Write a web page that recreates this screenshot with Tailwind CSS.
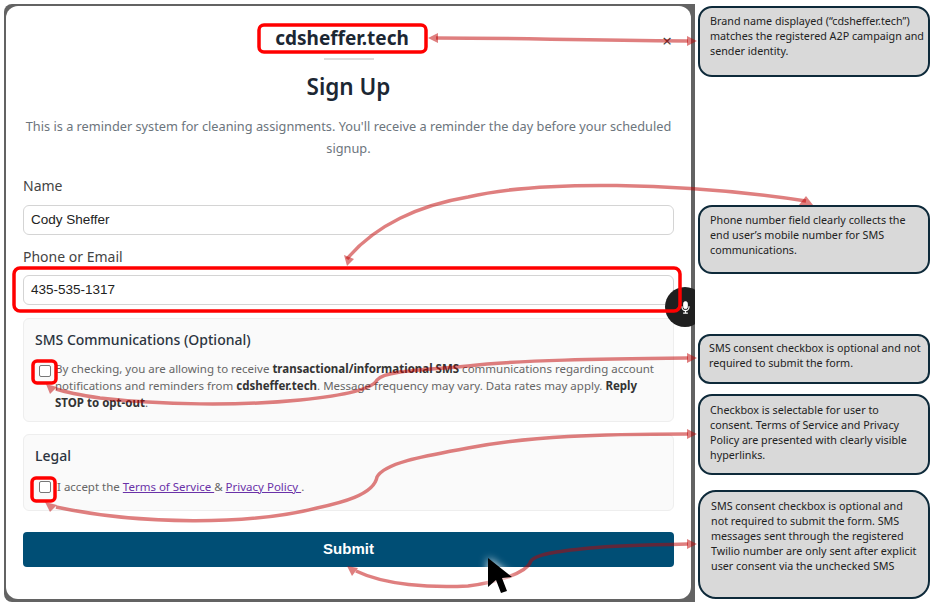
<!DOCTYPE html>
<html lang="en">
<head>
<meta charset="UTF-8" />
<title>Sign Up annotated</title>
<script src="https://cdn.jsdelivr.net/npm/@tailwindcss/browser@4"></script>
</head>
<body class="relative w-[936px] h-[603px] overflow-hidden bg-white font-['Noto_Sans',sans-serif]">
  <div class="flex items-start">
    <!-- modal screenshot -->
    <div class="relative ml-1 mt-1 w-[691px] h-[598px] overflow-hidden rounded-tl-lg rounded-bl-lg bg-[#636363] pl-[2px] pt-[2px]">
      <div class="flex flex-col w-[685px] h-[593px] rounded-xl bg-white px-[17px] pt-[20px]">
        <div class="relative text-center">
          <p class="pr-[13px] text-[19px] leading-6 font-bold text-[#1c2733]">cdsheffer.tech</p>
          <span class="absolute right-[2px] top-[5px] text-[17px] leading-5 text-[#444]">×</span>
        </div>
        <div class="mx-auto mt-[8px] h-[2px] w-[50px] bg-[#ddd]"></div>
        <h1 class="mt-[11px] text-center text-[22.5px] leading-8 font-semibold text-[#1c2733]">Sign Up</h1>
        <p class="mt-[13px] text-center text-[12.75px] leading-[21.5px] text-[#6c757d]">This is a reminder system for cleaning assignments. You'll receive a reminder the day before your scheduled signup.</p>

        <label class="mt-[17px] text-[14px] leading-5 text-[#444]">Name</label>
        <div class="mt-[9px] flex h-[30px] items-center rounded-md border border-[#d4d4d4] px-[7px] font-['Liberation_Sans',sans-serif] text-[13.5px] text-[#222]">Cody Sheffer</div>
        <label class="mt-[12px] text-[14px] leading-5 text-[#444]">Phone or Email</label>
        <div class="mt-[8px] flex h-[30px] items-center rounded-md border border-[#d4d4d4] px-[7px] font-['Liberation_Sans',sans-serif] text-[13.5px] text-[#222]">435-535-1317</div>

        <div class="mt-[13px] h-[104px] rounded-md border border-[#eee] bg-[#fafafa] pl-[11px] pr-[16px] pt-[11px]">
          <h2 class="text-[14px] leading-5 font-medium text-[#2b3440]">SMS Communications (Optional)</h2>
          <div class="mt-[10px] ml-[4px] flex items-start gap-[4px]">
            <span class="mt-[5px] h-[12px] w-[12px] shrink-0 rounded-[2px] border border-[#777] bg-white"></span>
            <p class="text-[11.5px] leading-[17px] text-[#666]">By checking, you are allowing to receive <b class="text-[#333]">transactional/informational SMS</b> communications regarding account notifications and reminders from <b class="text-[#333]">cdsheffer.tech</b>. Message frequency may vary. Data rates may apply. <b class="text-[#333]">Reply STOP to opt-out</b>.</p>
          </div>
        </div>

        <div class="mt-[12px] h-[77px] rounded-md border border-[#eee] bg-[#fafafa] pl-[11px] pt-[11px]">
          <h2 class="text-[14px] leading-5 font-medium text-[#2b3440]">Legal</h2>
          <div class="mt-[12px] ml-[4px] flex items-center gap-[6px]">
            <span class="h-[12px] w-[12px] shrink-0 rounded-[2px] border border-[#777] bg-white"></span>
            <p class="text-[11.5px] leading-[17px] text-[#666]">I accept the <a class="text-[#6a32a8] underline">Terms of Service </a>&amp; <a class="text-[#6a32a8] underline">Privacy Policy </a>.</p>
          </div>
        </div>

        <button class="mt-[21px] h-[35px] w-full rounded-[4px] bg-[#004e75] font-['Liberation_Sans',sans-serif] text-[15px] font-bold text-white">Submit</button>
      </div>

      <!-- floating mic button -->
      <div class="absolute left-[661px] top-[283px] flex h-10 w-10 items-center justify-center rounded-full bg-[#1f1f1f]">
        <svg width="11" height="13" viewBox="0 0 14 16" fill="none" stroke="white" class="ml-[1px]">
          <rect x="4.500" y="0.500" width="5" height="9" rx="2.500" fill="white" />
          <path d="M2.500 6.500v1a4.500 4.500 0 0 0 9 0v-1M7 12v3M4 15.200h6" stroke-width="1.500" />
        </svg>
      </div>
    </div>

    <!-- callouts -->
    <div class="ml-[3px] mt-[6px] flex w-[232px] flex-col text-[10.75px] leading-[15px] text-[#222]">
      <div class="h-[71px] rounded-[14px] border-2 border-[#0e2a3a] bg-[#d9d9d9] pl-[10px] pr-1 pt-[6px]">Brand name displayed (“cdsheffer.tech”) matches the registered A2P campaign and sender identity.</div>
      <div class="mt-[128px] h-[69px] rounded-[14px] border-2 border-[#0e2a3a] bg-[#d9d9d9] pl-[10px] pr-2 pt-[6px]">Phone number field clearly collects the end user’s mobile number for SMS communications.</div>
      <div class="mt-[60px] h-[50px] rounded-xl border-2 border-[#0e2a3a] bg-[#d9d9d9] pl-[9px] pr-1 pt-[5px]">SMS consent checkbox is optional and not required to submit the form.</div>
      <div class="mt-[10px] h-[81px] rounded-[14px] border-2 border-[#0e2a3a] bg-[#d9d9d9] pl-[10px] pr-2 pt-[7px]">Checkbox is selectable for user to consent. Terms of Service and Privacy Policy are presented with clearly visible hyperlinks.</div>
      <div class="mt-[15px] h-[109px] rounded-[18px] border-2 border-[#0e2a3a] bg-[#d9d9d9] pl-[11px] pr-[7px] pt-[7px]">SMS consent checkbox is optional and not required to submit the form. SMS messages sent through the registered Twilio number are only sent after explicit user consent via the unchecked SMS</div>
    </div>
  </div>

  <!-- annotations drawn over the screenshot -->
  <svg class="absolute inset-0" width="936" height="603" viewBox="0 0 936 603" fill="none">
    <g stroke="#c00000" stroke-opacity="0.5" stroke-width="3.500">
      <path d="M436 38C520 38 560 40 688 41" />
      <path d="M347 259C375 225 420 205 468 197C540 180 680 182 806 201" />
      <path d="M688 358C600 359 520 360 468 366C430 370 385 370 377 380C372 390 340 396 300 400C240 406 160 405 100 398C80 395 65 392 56 389" />
      <path d="M688 434C600 434 530 436 468 448C430 455 385 462 377 477C374 495 340 503 317 508C250 525 140 525 56 507" />
      <path d="M688 544C640 545 610 546 590 548C560 551 532 554 530 563C526 572 500 582 468 586C430 588 385 585 356 571" />
    </g>
    <g fill="#c00000" fill-opacity="0.5">
      <path d="M428 38l10-5v10z" />
      <path d="M697 41l-10-5v10z" />
      <path d="M347 266l-3-11 10 4z" />
      <path d="M813 205l-14 0l7-9z" />
      <path d="M697 358l-10-5v10z" />
      <path d="M46 384l11 3l-7 7z" />
      <path d="M697 434l-10-5v10z" />
      <path d="M45 502l12 3l-7 7z" />
      <path d="M697 544l-10-5v10z" />
      <path d="M347 566l11 2l-6 8z" />
    </g>
    <g stroke="#ff0000" stroke-width="3.500">
      <rect x="259" y="25" width="167" height="27" rx="5" />
      <rect x="14" y="268" width="666" height="43" rx="6" />
      <rect x="33" y="361" width="23" height="22" rx="4" />
      <rect x="32" y="478" width="23" height="23" rx="4" />
    </g>
    <path class="drop-shadow-[0_0_4px_#fff]" d="M488 558L512 577L502 578L507 591L501 593L496 580L488 587Z" fill="#000" />
  </svg>
</body>
</html>
